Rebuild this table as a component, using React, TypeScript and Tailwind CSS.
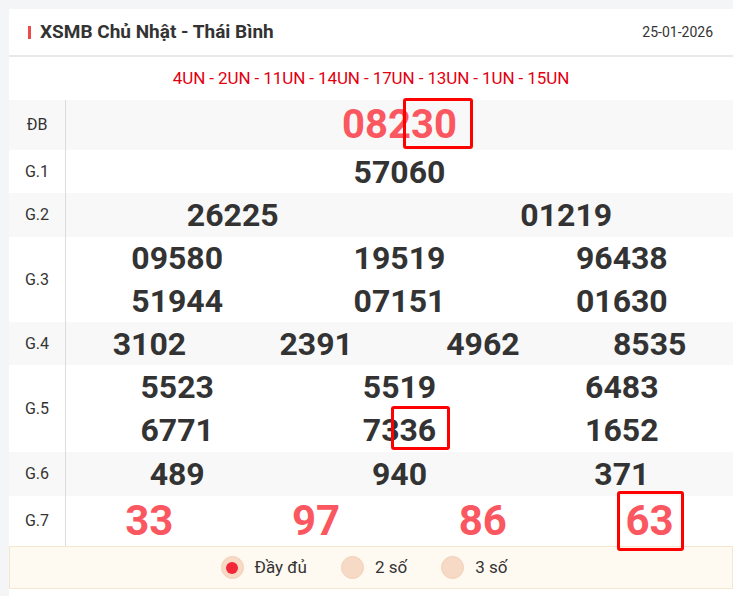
import React, { ReactNode } from 'react';

const font = { fontFamily: 'Roboto, "Noto Sans", sans-serif' };

const Mark: React.FC<{ children: ReactNode; className: string }> = ({ children, className }) => (
  <span className="relative">
    {children}
    <span className={`absolute border-[3px] border-[#ff0000] rounded-[3px] ${className}`} />
  </span>
);

const Row: React.FC<{ label: string; gray?: boolean; className?: string; children: ReactNode }> = ({
  label,
  gray,
  className = 'h-[43px]',
  children,
}) => (
  <div className={`flex ${gray ? 'bg-[#f8f8f8]' : 'bg-white'} ${className}`}>
    <div className="w-[57px] shrink-0 border-r border-[#dcdcdc] flex items-center justify-center text-[16px] text-[#333]">
      {label}
    </div>
    <div className="flex-1 flex flex-col">{children}</div>
  </div>
);

const Line: React.FC<{ nums: ReactNode[]; red?: boolean; size?: string }> = ({ nums, red, size = 'text-[32px]' }) => (
  <div className="flex-1 flex items-center">
    {nums.map((n, i) => (
      <div
        key={i}
        className={`flex-1 text-center font-bold leading-none ${size} ${red ? 'text-[#fa5760]' : 'text-[#333]'}`}
      >
        {n}
      </div>
    ))}
  </div>
);

const Radio: React.FC<{ label: string; checked?: boolean }> = ({ label, checked }) => (
  <div className="flex items-center gap-[11px]">
    <span className="w-[23px] h-[23px] rounded-full bg-[#f7dac5] border border-[#f3cfb6] flex items-center justify-center">
      {checked && <span className="w-[12px] h-[12px] rounded-full bg-[#f2283a]" />}
    </span>
    <span className="text-[17px] text-[#333]">{label}</span>
  </div>
);

export default function App() {
  return (
    <div className="min-h-screen bg-[#f4f5f7] pl-[9px] pt-[9px]" style={font}>
      <div className="bg-white">
        <div className="h-[48px] flex items-center justify-between pl-[19px] pr-[20px] border-b-2 border-[#e9e7e9]">
          <div className="flex items-center gap-[9px]">
            <span className="w-[3px] h-[13px] bg-[#ef4a4a]" />
            <span className="text-[19px] font-bold text-[#333]">XSMB Chủ Nhật - Thái Bình</span>
          </div>
          <span className="text-[14px] text-[#333]">25-01-2026</span>
        </div>
        <div className="h-[43px] flex items-center justify-center text-[17px] text-[#e3000f] tracking-[-0.1px]">
          4UN - 2UN - 11UN - 14UN - 17UN - 13UN - 1UN - 15UN
        </div>

        <Row label="ĐB" gray className="h-[50px]">
          <Line
            red
            size="text-[40px]"
            nums={[
              <>
                082
                <Mark className="-left-[8px] -right-[16px] -top-[3px] -bottom-[1px]">30</Mark>
              </>,
            ]}
          />
        </Row>
        <Row label="G.1">
          <Line nums={['57060']} />
        </Row>
        <Row label="G.2" gray className="h-[44px]">
          <Line nums={['26225', '01219']} />
        </Row>
        <Row label="G.3" className="h-[85px]">
          <Line nums={['09580', '19519', '96438']} />
          <Line nums={['51944', '07151', '01630']} />
        </Row>
        <Row label="G.4" gray>
          <Line nums={['3102', '2391', '4962', '8535']} />
        </Row>
        <Row label="G.5" className="h-[87px]">
          <Line nums={['5523', '5519', '6483']} />
          <Line
            nums={[
              '6771',
              <>
                73
                <Mark className="-left-[8px] -right-[14px] -top-[5px] -bottom-[1px]">36</Mark>
              </>,
              '1652',
            ]}
          />
        </Row>
        <Row label="G.6" gray className="h-[44px]">
          <Line nums={['489', '940', '371']} />
        </Row>
        <Row label="G.7" className="h-[50px]">
          <Line
            red
            size="text-[42px]"
            nums={['33', '97', '86', <Mark className="-left-[9px] -right-[10px] -top-[5px] -bottom-[6px]">63</Mark>]}
          />
        </Row>

        <div className="h-[43px] bg-[#fffaf1] border border-[#f5e7cf] flex items-center justify-center gap-[34px] pr-[14px]">
          <Radio label="Đầy đủ" checked />
          <Radio label="2 số" />
          <Radio label="3 số" />
        </div>
        <div className="h-[8px]" />
      </div>
    </div>
  );
}
